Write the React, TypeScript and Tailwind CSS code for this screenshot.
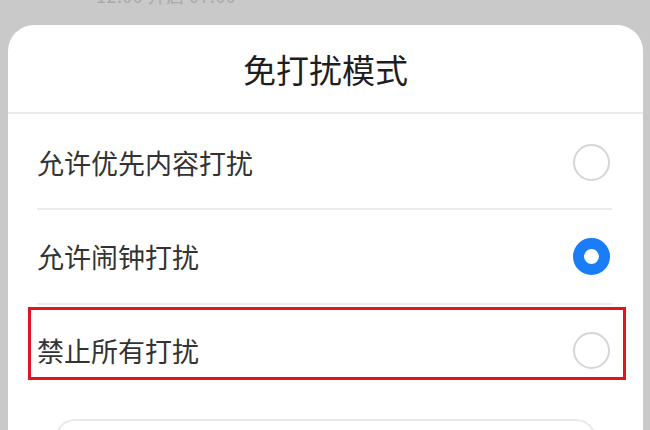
import React from 'react';

const Radio = ({ checked }: { checked?: boolean }) =>
  checked ? (
    <span className="block w-[37px] h-[37px] rounded-full border-[11px] border-[#1a7cf6] bg-white" />
  ) : (
    <span className="block w-[37px] h-[37px] rounded-full border-2 border-[#d6d6d6] bg-white" />
  );

const options = [
  { label: '允许优先内容打扰', checked: false, row: 'h-[96px] pt-[3px] border-b-2 border-[#ececec]' },
  { label: '允许闹钟打扰', checked: true, row: 'h-[95px] pb-[1px] border-b-2 border-[#ececec]' },
  { label: '禁止所有打扰', checked: false, marked: true, row: 'h-[96px] pb-[6px]' },
];

export default function App() {
  return (
    <div
      className="h-[430px] w-[650px] overflow-hidden bg-[#c9c9c9] pl-[8px] pr-[7px] flex flex-col"
      style={{ fontFamily: '"Noto Sans CJK SC", "Noto Sans", sans-serif' }}
    >
      {/* faint text of the page behind, cut off by the top edge */}
      <div className="h-[25px] shrink-0 overflow-hidden pl-[88px]">
        <div className="-mt-[14px] text-[18px] leading-[18px] text-[#a9a9a9] tracking-wide">12:00 开启 07:00</div>
      </div>

      <div className="flex-1 bg-white rounded-t-[26px] flex flex-col">
        <div className="h-[89px] shrink-0 flex items-center justify-center border-b-2 border-[#ebebeb]">
          <h1 className="text-[33px] leading-none text-[#1e1e1e] pt-[2px]">免打扰模式</h1>
        </div>

        <ul className="pl-[29px] pr-[31px]">
          {options.map((o) => (
            <li key={o.label} className={`relative flex items-center justify-between ${o.row}`}>
              <span className="text-[27px] leading-none text-[#333333]">{o.label}</span>
              <span className="mr-[2px]">
                <Radio checked={o.checked} />
              </span>
              {o.marked && (
                <span className="absolute left-[-9px] right-[-14px] top-[2px] h-[73px] border-[3px] border-[#e3141f] pointer-events-none" />
              )}
            </li>
          ))}
        </ul>

        <div className="mx-[47px] mt-[18px] h-[40px] rounded-t-[20px] border-2 border-b-0 border-[#e9e9e9]" />
      </div>
    </div>
  );
}
